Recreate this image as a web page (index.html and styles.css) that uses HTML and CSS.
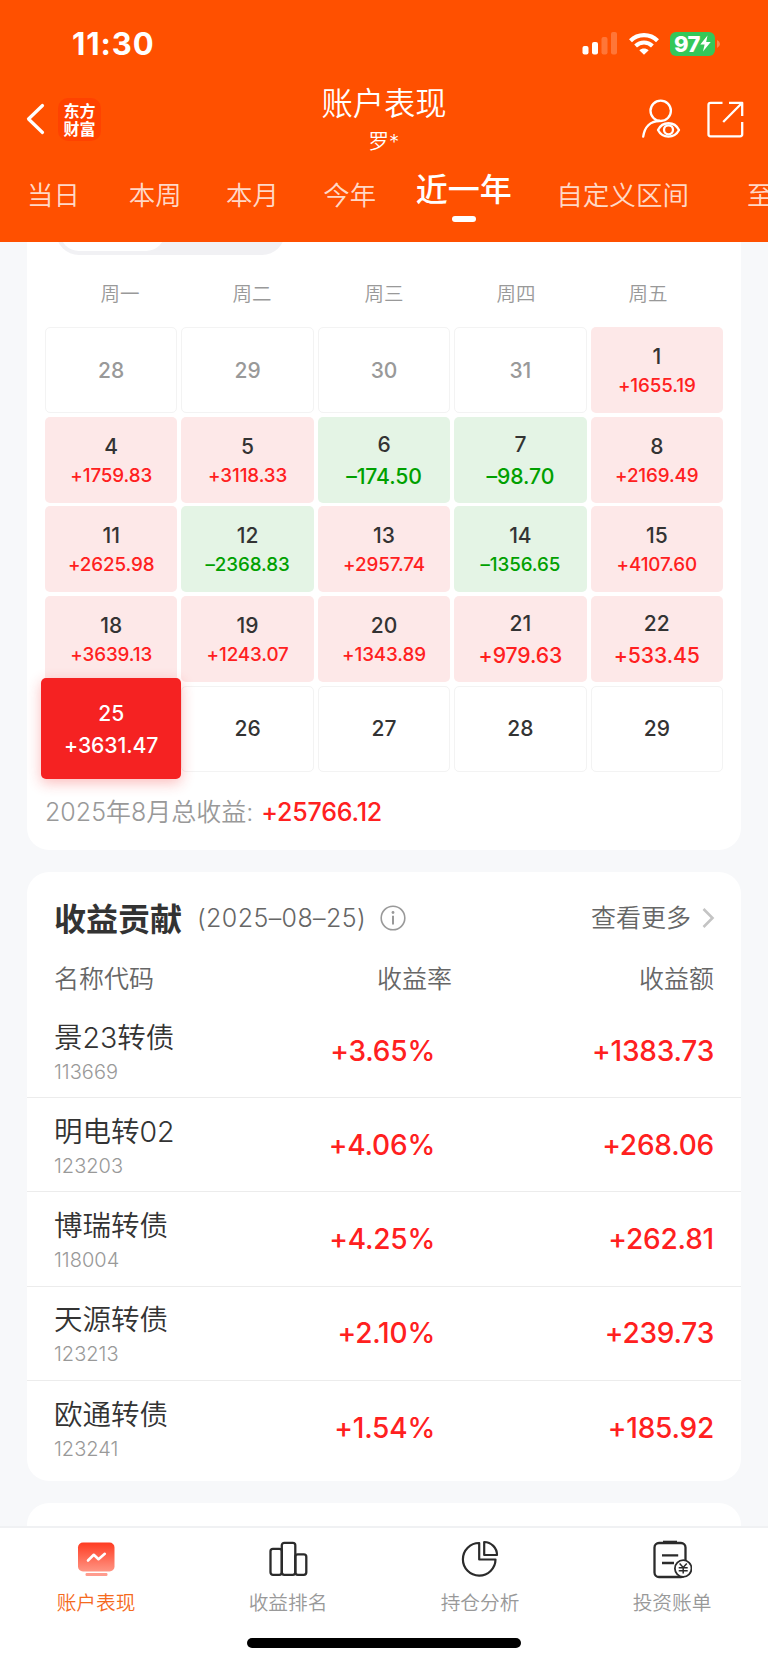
FILE: index.html
```html
<!DOCTYPE html>
<html lang="zh-CN">
<head>
  <meta charset="UTF-8">
  <title>账户表现</title>
  <link rel="stylesheet" href="styles.css">
</head>
<body>
  <header class="header">
    <div class="status">
      <span class="time">11:30</span>
      <svg class="signal" width="36" height="23" viewBox="0 0 36 23" fill="#fff">
        <rect x="0.5" y="14" width="6" height="8.5" rx="2"/>
        <rect x="10" y="10" width="6" height="12.5" rx="2"/>
        <rect x="19.5" y="5" width="6" height="17.5" rx="2" opacity=".22"/>
        <rect x="29" y="0" width="6" height="22.5" rx="2" opacity=".22"/>
      </svg>
      <svg class="wifi" width="30" height="22" viewBox="0 0 30 22" fill="none" stroke="#fff">
        <path d="M1.5 7.7 C9 0.3 21 0.3 28.5 7.7" stroke-width="4.2"/>
        <path d="M6.6 13 C11.5 8.3 18.5 8.3 23.4 13" stroke-width="4"/>
        <path d="M15 21.8 L10.3 17.3 C13 14.9 17 14.9 19.7 17.3 Z" fill="#fff" stroke="none"/>
      </svg>
      <span class="battery">97<svg width="11" height="17" viewBox="0 0 11 17" fill="#fff"><path d="M7.5 0.5 L0.3 9.6 H4.6 L3 16.5 L10.7 7 H6.2 Z"/></svg></span>
      <svg class="battery-tip" width="3" height="8" viewBox="0 0 3 8"><path d="M0 0 Q3 1.5 3 4 Q3 6.5 0 8 Z" fill="#fff" opacity=".3"/></svg>
    </div>

    <div class="nav">
      <div class="nav-left">
        <svg width="19" height="32" viewBox="0 0 19 32" fill="none" stroke="#fff" stroke-width="3.2" stroke-linecap="round" stroke-linejoin="round"><path d="M16.5 2.5 L2.5 16 L16.5 29.5"/></svg>
        <div class="logo"><span>东方</span><span>财富</span></div>
      </div>
      <div class="nav-title">
        <h1>账户表现</h1>
        <p>罗*</p>
      </div>
      <div class="nav-right">
        <svg width="40" height="40" viewBox="0 0 40 40" fill="none" stroke="#fff" stroke-width="2.3" stroke-linecap="round" stroke-linejoin="round">
          <circle cx="19.7" cy="11.8" r="10.2"/>
          <path d="M2.2 37.6 C3.5 28.5 9 22 18.5 22"/>
          <path d="M17 31 C21.5 22 33.5 22 38 31 C33.5 39.7 21.5 39.7 17 31 Z"/>
          <circle cx="27.5" cy="30.8" r="4.5"/>
        </svg>
        <svg width="37" height="37" viewBox="0 0 37 37" fill="none" stroke="#fff" stroke-width="2.3" stroke-linejoin="round">
          <path d="M15.5 1.8 H3.5 Q1.5 1.8 1.5 3.8 V33.3 Q1.5 35.3 3.5 35.3 H33 Q35.2 35.3 35.2 33.3 V21"/>
          <path d="M22 1.8 H35.2 V15 M34.5 2.5 L16.2 21"/>
        </svg>
      </div>
    </div>

    <nav class="ranges">
      <a class="first">当日</a>
      <a>本周</a>
      <a>本月</a>
      <a>今年</a>
      <a class="active">近一年</a>
      <a class="custom">自定义区间</a>
      <a>至今</a>
    </nav>
  </header>

  <main>
    <section class="card calendar">
      <div class="switch"><div class="switch-on"></div></div>
      <div class="weekdays">
        <span>周一</span><span>周二</span><span>周三</span><span>周四</span><span>周五</span>
      </div>
      <div class="days">
        <div class="day other">28</div>
        <div class="day other">29</div>
        <div class="day other">30</div>
        <div class="day other">31</div>
        <div class="day up">1<b>+1655.19</b></div>

        <div class="day up">4<b>+1759.83</b></div>
        <div class="day up">5<b>+3118.33</b></div>
        <div class="day down big">6<b>–174.50</b></div>
        <div class="day down big">7<b>–98.70</b></div>
        <div class="day up">8<b>+2169.49</b></div>

        <div class="day up">11<b>+2625.98</b></div>
        <div class="day down">12<b>–2368.83</b></div>
        <div class="day up">13<b>+2957.74</b></div>
        <div class="day down">14<b>–1356.65</b></div>
        <div class="day up">15<b>+4107.60</b></div>

        <div class="day up">18<b>+3639.13</b></div>
        <div class="day up">19<b>+1243.07</b></div>
        <div class="day up">20<b>+1343.89</b></div>
        <div class="day up big">21<b>+979.63</b></div>
        <div class="day up big">22<b>+533.45</b></div>

        <div class="day big selected">25<b>+3631.47</b></div>
        <div class="day">26</div>
        <div class="day">27</div>
        <div class="day">28</div>
        <div class="day">29</div>
      </div>
      <div class="total"><span>2025年8月总收益:</span><b>+25766.12</b></div>
    </section>

    <section class="card contrib">
      <div class="contrib-head">
        <h2>收益贡献</h2>
        <span class="date">(2025–08–25)</span>
        <svg width="26" height="26" viewBox="0 0 26 26" fill="none" stroke="#999" stroke-width="1.6">
          <circle cx="13" cy="13" r="11.8"/>
          <path d="M13 10.8 V19.5" stroke-width="2"/>
          <circle cx="13" cy="7.5" r="1.4" fill="#999" stroke="none"/>
        </svg>
        <a class="more">查看更多
          <svg width="13" height="20" viewBox="0 0 13 20" fill="none" stroke="#c4c4c4" stroke-width="2.6"><path d="M1.5 1 L10.5 10 L1.5 19"/></svg>
        </a>
      </div>
      <div class="row labels"><span>名称代码</span><span class="rate">收益率</span><span class="sum">收益额</span></div>
      <div class="row"><div class="name">景23转债<small>113669</small></div><b class="rate">+3.65%</b><b class="sum">+1383.73</b></div>
      <div class="row"><div class="name">明电转02<small>123203</small></div><b class="rate">+4.06%</b><b class="sum">+268.06</b></div>
      <div class="row"><div class="name">博瑞转债<small>118004</small></div><b class="rate">+4.25%</b><b class="sum">+262.81</b></div>
      <div class="row"><div class="name">天源转债<small>123213</small></div><b class="rate">+2.10%</b><b class="sum">+239.73</b></div>
      <div class="row"><div class="name">欧通转债<small>123241</small></div><b class="rate">+1.54%</b><b class="sum">+185.92</b></div>
    </section>

    <section class="card next"></section>
  </main>

  <footer class="tabbar">
    <div class="tabs">
      <a class="tab on">
        <svg width="40" height="40" viewBox="0 0 40 40">
          <defs>
            <linearGradient id="screen" x1="0" y1="0" x2="0" y2="1">
              <stop offset="0" stop-color="#ff3b21"/>
              <stop offset="1" stop-color="#ff9584"/>
            </linearGradient>
          </defs>
          <rect x="2" y="2.5" width="36.5" height="29" rx="5" fill="url(#screen)"/>
          <rect x="9.5" y="33" width="22" height="3" rx="1.2" fill="#ff9c8e"/>
          <path d="M12 20.5 L17.8 14.8 L22.5 19.2 L28.8 13.8" fill="none" stroke="#fff" stroke-width="2.6" stroke-linecap="round" stroke-linejoin="round"/>
        </svg>
        账户表现
      </a>
      <a class="tab">
        <svg width="40" height="40" viewBox="0 0 40 40" fill="none" stroke="#2b2b2b" stroke-width="2.3">
          <rect x="2.5" y="8.8" width="11.3" height="26" rx="2.5"/>
          <rect x="13.8" y="2.8" width="13.5" height="32" rx="2.5"/>
          <rect x="27.3" y="14.3" width="11" height="20.5" rx="2.5"/>
        </svg>
        收益排名
      </a>
      <a class="tab">
        <svg width="40" height="40" viewBox="0 0 40 40" fill="none" stroke="#2b2b2b" stroke-width="2.2" stroke-linejoin="round">
          <path d="M19.2 3 A16.3 16.3 0 1 0 35.5 19.5 H19.2 Z"/>
          <path d="M24.2 2 A13 13 0 0 1 37 15 H24.2 Z"/>
        </svg>
        持仓分析
      </a>
      <a class="tab">
        <svg width="40" height="40" viewBox="0 0 40 40" fill="none" stroke="#2b2b2b" stroke-width="2.3">
          <rect x="2.5" y="3" width="31" height="34" rx="4.5"/>
          <path d="M11 2.2 H25" stroke-width="3"/>
          <path d="M10 15.3 H26.2 M10 23 H22"/>
          <circle cx="31.2" cy="28.5" r="8.3" fill="#fff" stroke-width="1.8"/>
          <path d="M27.6 23.5 L31.2 27.5 L34.8 23.5 M31.2 27.5 V33.5 M26.7 27.7 H35.7 M26.7 30.7 H35.7" stroke-width="1.5"/>
        </svg>
        投资账单
      </a>
    </div>
    <div class="home-bar"></div>
  </footer>
</body>
</html>
```

FILE: styles.css
```css
* {
  box-sizing: border-box;
}
body {
  margin: 0;
  height: 1662px;
  display: flex;
  flex-direction: column;
  overflow: hidden;
  background: #f7f8fa;
  color: #333;
  font-family: Inter, "Noto Sans CJK SC", sans-serif;
  font-weight: 350;
}
h1, h2, p {
  margin: 0;
  font-weight: 350;
}
svg {
  display: block;
  flex: none;
}

/* header */
.header {
  flex: none;
  height: 242px;
  background: #ff5000;
  color: #fff;
  overflow: hidden;
}
.status {
  display: flex;
  align-items: center;
  height: 87px;
  padding: 0 48px 0 72px;
}
.time {
  flex: 1;
  font-size: 31px;
  font-weight: 700;
  letter-spacing: .9px;
}
.wifi {
  margin: 0 11px 0 11px;
}
.battery {
  display: flex;
  align-items: center;
  justify-content: center;
  width: 45px;
  height: 24px;
  border-radius: 6px;
  background: #34c759;
  font-size: 22px;
  font-weight: 800;
  letter-spacing: -.5px;
}
.battery-tip {
  margin-left: 2px;
}
.nav {
  display: grid;
  grid-template-columns: 1fr 200px 1fr;
  height: 77px;
  padding: 0 24px 0 26px;
}
.nav-left, .nav-right {
  display: flex;
  align-items: center;
  height: 64px;
}
.nav-left {
  gap: 13px;
}
.nav-right {
  justify-content: flex-end;
  gap: 26px;
}
.logo {
  display: flex;
  flex-direction: column;
  align-items: center;
  justify-content: center;
  width: 43px;
  height: 43px;
  border-radius: 10px;
  background: #ff4200;
  font: 700 16px/18px "Noto Sans CJK SC", sans-serif;
}
.nav-title {
  margin: 0 1px 0 -1px;
  text-align: center;
}
.nav-title h1 {
  margin-top: 2px;
  font-size: 31.3px;
  line-height: 31px;
}
.nav-title p {
  margin-top: 10px;
  font-size: 20.5px;
  line-height: 24px;
}
.ranges {
  display: flex;
  align-items: flex-start;
  padding-left: 27px;
  white-space: nowrap;
}
.ranges a {
  flex: none;
  margin: 14px 44.5px 0 0;
  font-size: 26.4px;
  line-height: 34px;
  color: rgba(255, 255, 255, .8);
}
.ranges .first {
  margin-right: 49px;
}
.ranges .active {
  margin-top: 6px;
  margin-left: -5px;
  font-size: 32px;
  font-weight: 500;
  line-height: 40px;
  color: #fff;
}
.ranges .active::after {
  content: "";
  display: block;
  width: 24px;
  height: 6px;
  margin: 6px auto 0;
  border-radius: 3px;
  background: #fff;
}
.ranges .custom {
  margin-right: 58px;
  font-size: 26.6px;
}

/* cards */
main {
  flex: 1;
  min-height: 0;
  padding: 0 27px;
  overflow: hidden;
}
.card {
  background: #fff;
  border-radius: 22px;
}
.calendar {
  height: 658px;
  margin-top: -50px;
  padding: 17px 18px 0;
}
.switch {
  width: 229px;
  height: 46px;
  margin-left: 11px;
  padding: 4px;
  border-radius: 23px;
  background: #f1f1f4;
}
.switch-on {
  width: 105px;
  height: 38px;
  border-radius: 19px;
  background: #fff;
}
.weekdays {
  display: grid;
  grid-template-columns: repeat(5, 1fr);
  height: 72px;
  padding: 0 9px;
  text-align: center;
  font-size: 19.5px;
  line-height: 78px;
  color: #999;
}
.days {
  display: grid;
  grid-template-columns: repeat(5, 1fr);
  grid-template-rows: repeat(5, 86px);
  gap: 3.7px 4px;
}
.day {
  display: flex;
  flex-direction: column;
  align-items: center;
  justify-content: center;
  padding-top: 1px;
  border: 1px solid #f3f3f3;
  border-radius: 5px;
  font-size: 21px;
  font-weight: 500;
  line-height: 26px;
}
.day b {
  margin-top: 3px;
  font-size: 18.8px;
  font-weight: 500;
  letter-spacing: -.1px;
  line-height: 26px;
}
.big b {
  margin-top: 5px;
  font-size: 21.2px;
}
.other {
  color: #999;
}
.up, .down {
  padding-top: 3px;
  border: none;
}
.day.big {
  padding-top: 1px;
}
.up {
  background: #fde8e8;
}
.up b {
  color: #ff2020;
}
.down {
  background: #e4f4e5;
}
.down b {
  color: #00a000;
}
.selected {
  z-index: 1;
  margin: -7.5px -3.7px;
  border: none;
  background: #f52222;
  color: #fff;
  box-shadow: 0 4px 14px rgba(245, 34, 34, .3);
}
.total {
  display: flex;
  align-items: center;
  gap: 8px;
  margin-top: 25px;
  font-size: 25px;
  line-height: 30px;
  color: #999;
}
.total b {
  font-weight: 500;
  letter-spacing: -.2px;
  color: #ff2020;
}

.contrib {
  height: 609px;
  margin-top: 22px;
}
.contrib-head {
  display: flex;
  align-items: center;
  height: 92px;
  padding: 0 26px 0 27px;
}
.contrib-head h2 {
  margin-top: -3px;
  font-size: 32px;
  font-weight: 700;
}
.date {
  margin: 0 14px 0 15px;
  font-size: 25px;
  letter-spacing: .4px;
  color: #666;
}
.more {
  display: flex;
  align-items: center;
  gap: 11px;
  margin-left: auto;
  font-size: 25px;
  line-height: 30px;
  color: #666;
}
.row {
  display: grid;
  grid-template-columns: 220px 161px 1fr;
  align-items: center;
  height: 94.2px;
  padding: 0 27px;
  border-bottom: 1px solid #ececec;
}
.row:last-child {
  border: none;
}
.row b {
  font-size: 28px;
  font-weight: 500;
  letter-spacing: -.2px;
  color: #ff2020;
}
.rate, .sum {
  text-align: right;
}
.labels {
  grid-template-columns: 220px 178px 1fr;
  align-items: start;
  height: 40px;
  border: none;
  font-size: 25px;
  line-height: 30px;
  color: #666;
}
.name {
  padding-top: 3px;
  font-size: 28.5px;
  line-height: 36px;
}
.name small {
  display: block;
  margin-top: 3px;
  font-size: 20px;
  line-height: 26px;
  color: #999;
}
.next {
  height: 60px;
  margin-top: 22px;
}

/* bottom tabs */
.tabbar {
  flex: none;
  height: 136px;
  border-top: 2px solid #f0f1f3;
  background: #fff;
}
.tabs {
  display: grid;
  grid-template-columns: repeat(4, 1fr);
  height: 110px;
  padding-top: 12px;
}
.tab {
  display: flex;
  flex-direction: column;
  align-items: center;
  gap: 8px;
  font-size: 19.7px;
  line-height: 30px;
  color: #999;
}
.on {
  color: #f56a1d;
}
.home-bar {
  width: 274px;
  height: 10px;
  margin: 0 auto;
  border-radius: 5px;
  background: #000;
}
```
